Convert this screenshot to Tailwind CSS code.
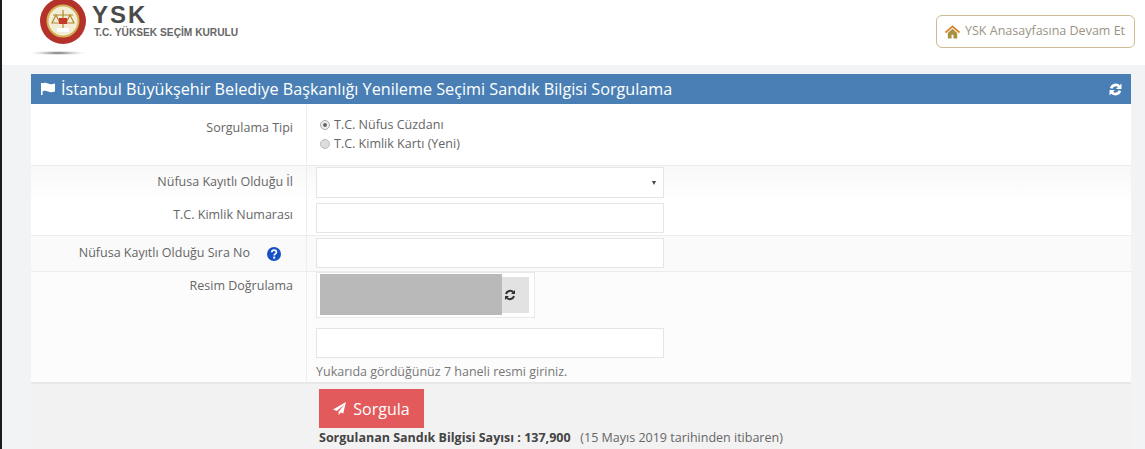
<!DOCTYPE html>
<html lang="en">
<head>
    <meta charset="UTF-8" />
    <title>YSK Sandık Bilgisi Sorgulama</title>
    <script src="https://cdn.jsdelivr.net/npm/@tailwindcss/browser@4"></script>
</head>
<body class="h-[449px] overflow-hidden bg-[#f1f3f4] font-['Open_Sans',sans-serif] text-[#666]">
<div class="h-full border-l-2 border-[#1c1c1c] flex flex-col">

    <!-- Header -->
    <header class="h-[65px] bg-white flex justify-between shrink-0">
        <div class="flex pl-[26px]">
            <svg class="w-[64px] h-[63px]" viewBox="0 0 64 63">
                <defs>
                    <radialGradient id="shadow"><stop offset="0" stop-color="#555"/><stop offset="1" stop-color="#fff" stop-opacity="0"/></radialGradient>
                </defs>
                <ellipse cx="30" cy="53" rx="32" ry="2.5" fill="url(#shadow)"/>
                <circle cx="35" cy="21" r="23" fill="#b5322b"/>
                <circle cx="35" cy="21" r="15.5" fill="#f3edd8" stroke="#d2b254" stroke-width="2"/>
                <path d="M25 15h20M35 10v21M28 15l-4 8h8zM42 15l-4 8h8z" fill="none" stroke="#b08a2c" stroke-width="1.2"/>
                <rect x="29" y="28" width="12" height="4" fill="#fff"/>
                <path d="M31 18h8v6h-8z" fill="#c9372c"/>
            </svg>
            <div class="pt-[3px]">
                <div class="font-['Liberation_Sans',sans-serif] font-bold text-[24px] tracking-[2px] leading-[24px] text-[#4a4a4a]">YSK</div>
                <div class="font-['Liberation_Sans',sans-serif] font-bold text-[10.2px] leading-[12px] text-[#666] pl-[2px] whitespace-nowrap">T.C. YÜKSEK SEÇİM KURULU</div>
            </div>
        </div>
        <div class="pr-[10px] pt-[15px]">
            <a class="flex items-center gap-[5px] h-[33px] w-[199px] pl-[8px] border border-[#cdbb92] rounded-[6px] text-[12.5px] text-[#9a9484] whitespace-nowrap">
                <svg class="w-[15px] h-[14px]" viewBox="0 0 16 14">
                    <path d="M3 8v6h4V10h2v4h4V8L8 3.5z" fill="#a9913f"/>
                    <path d="M0.5 7.5 8 1l7.5 6.5" fill="none" stroke="#d9822b" stroke-width="2"/>
                </svg>
                YSK Anasayfasına Devam Et
            </a>
        </div>
    </header>

    <!-- Panel -->
    <main class="flex-1 pl-[29px] pt-[9px] min-h-0">
        <section class="w-[1100px] h-[375px] bg-white flex flex-col">
            <div class="h-[30px] shrink-0 bg-[#4a7fb5] text-white flex items-center justify-between pl-[10px] pr-[9px]">
                <div class="flex items-center gap-[5px] text-[16.2px] whitespace-nowrap">
                    <svg class="w-[15px] h-[13px]" viewBox="0 0 15 13" fill="#fff"><path d="M1 1.5c2-1 4-1 6 0s4 1 7 0v8c-3 1-5 1-7 0s-4-1-6 0z"/><rect x="0" y="1" width="1.6" height="12"/></svg>
                    İstanbul Büyükşehir Belediye Başkanlığı Yenileme Seçimi Sandık Bilgisi Sorgulama
                </div>
                <svg class="w-[13px] h-[13px]" viewBox="0 0 24 24" fill="none" stroke="#fff" stroke-width="5">
                    <path d="M4 10a8.5 8.5 0 0 1 15-3l2 2M20 14a8.5 8.5 0 0 1-15 3l-2-2"/>
                    <path d="M23 1v10H13zM1 23V13h10z" fill="#fff" stroke="none"/>
                </svg>
            </div>

            <!-- Radio row -->
            <div class="h-[62px] shrink-0 flex border-b border-[#ececec] text-[12.5px]">
                <div class="w-[262px] text-right pt-[15px]">Sorgulama Tipi</div>
                <div class="ml-[13px] my-[1px] border-l border-[#eee] pl-[13px] pt-[10px] leading-[19px] whitespace-nowrap">
                    <div class="flex items-center gap-[4px]"><span class="w-[10px] h-[10px] rounded-full border border-[#aaa] bg-[#eee] flex items-center justify-center"><span class="w-[4px] h-[4px] rounded-full bg-[#666]"></span></span>T.C. Nüfus Cüzdanı</div>
                    <div class="flex items-center gap-[4px]"><span class="w-[10px] h-[10px] rounded-full border border-[#bbb] bg-[#ddd]"></span>T.C. Kimlik Kartı (Yeni)</div>
                </div>
            </div>

            <!-- Il -->
            <div class="h-[35px] shrink-0 flex bg-gradient-to-b from-[#f8f8f8] to-white text-[12.5px]">
                <div class="w-[262px] text-right pt-[7px]">Nüfusa Kayıtlı Olduğu İl</div>
                <div class="ml-[13px] border-l border-[#eee] pl-[9px] pt-[1px]">
                    <div class="w-[348px] h-[31px] bg-white border border-[#e5e5e5] flex items-center justify-end pr-[7px]">
                        <span class="w-0 h-0 border-x-[2.5px] border-x-transparent border-t-[4px] border-t-[#444]"></span>
                    </div>
                </div>
            </div>

            <!-- TC no -->
            <div class="h-[35px] shrink-0 flex border-b border-[#ececec] text-[12.5px]">
                <div class="w-[262px] text-right pt-[5px]">T.C. Kimlik Numarası</div>
                <div class="ml-[13px] border-l border-[#eee] pl-[9px] pt-[2px]">
                    <div class="w-[348px] h-[30px] bg-white border border-[#e5e5e5]"></div>
                </div>
            </div>

            <!-- Sira no -->
            <div class="h-[36px] shrink-0 flex bg-[#fafafa] border-b border-[#ececec] text-[12.5px]">
                <div class="w-[262px] flex justify-end items-start pt-[8px] pr-[12px] whitespace-nowrap">
                    Nüfusa Kayıtlı Olduğu Sıra No
                    <svg class="w-[14px] h-[14px] ml-[17px] mt-[3px]" viewBox="0 0 14 14">
                        <circle cx="7" cy="7" r="7" fill="#1650c4"/>
                        <path d="M4.8 5.3c0-3 4.6-3 4.6 0 0 1.6-2.2 1.6-2.2 3.2" fill="none" stroke="#fff" stroke-width="1.7"/>
                        <rect x="6.2" y="9.6" width="2" height="2" fill="#fff"/>
                    </svg>
                </div>
                <div class="ml-[13px] border-l border-[#eee] pl-[9px] pt-[2px]">
                    <div class="w-[348px] h-[30px] bg-white border border-[#e5e5e5]"></div>
                </div>
            </div>

            <!-- Captcha -->
            <div class="h-[112px] shrink-0 flex bg-[#fcfcfc] border-b-2 border-[#e8e8e8] text-[12.5px]">
                <div class="w-[262px] text-right pt-[5px]">Resim Doğrulama</div>
                <div class="ml-[13px] border-l border-[#eee] pl-[9px]">
                    <div class="w-[219px] h-[46px] bg-white border border-[#e8e8e8] p-[4px] pl-[3px]">
                        <div class="w-[209px] h-[36px] bg-[#e2e2e2] flex">
                            <div class="w-[182px] h-[41px] bg-[#b9b9b9] -mt-[3px]"></div>
                            <svg class="w-[12px] h-[12px] ml-[2px] mt-[12px]" viewBox="0 0 24 24" fill="none" stroke="#333" stroke-width="4">
                                <path d="M4 10a8.5 8.5 0 0 1 15-3l2 2M20 14a8.5 8.5 0 0 1-15 3l-2-2"/>
                                <path d="M22 2v8h-8zM2 22v-8h8z" fill="#333" stroke="none"/>
                            </svg>
                        </div>
                    </div>
                    <div class="w-[348px] h-[30px] bg-white border border-[#e5e5e5] mt-[10px]"></div>
                    <p class="leading-[16px] mt-[6px] text-[#777] whitespace-nowrap">Yukarıda gördüğünüz 7 haneli resmi giriniz.</p>
                </div>
            </div>

            <!-- Footer -->
            <div class="flex-1 bg-[#f2f2f2] pl-[288px] pt-[5px]">
                <button class="w-[105px] h-[39px] bg-[#e25a5c] text-white text-[16px] flex items-center justify-center gap-[7px]">
                    <svg class="w-[13px] h-[13px]" viewBox="0 0 14 14" fill="#fff"><path d="M14 0 0 8l4 1.6L12 3 6 10.5V14l2.4-2.8 2.6 1.2z"/></svg>
                    Sorgula
                </button>
                <p class="text-[12.5px] leading-[16px] mt-[2px] whitespace-nowrap"><b class="text-[#444]">Sorgulanan Sandık Bilgisi Sayısı : 137,900</b>&nbsp;&nbsp; (15 Mayıs 2019 tarihinden itibaren)</p>
            </div>
        </section>
    </main>
</div>
</body>
</html>
